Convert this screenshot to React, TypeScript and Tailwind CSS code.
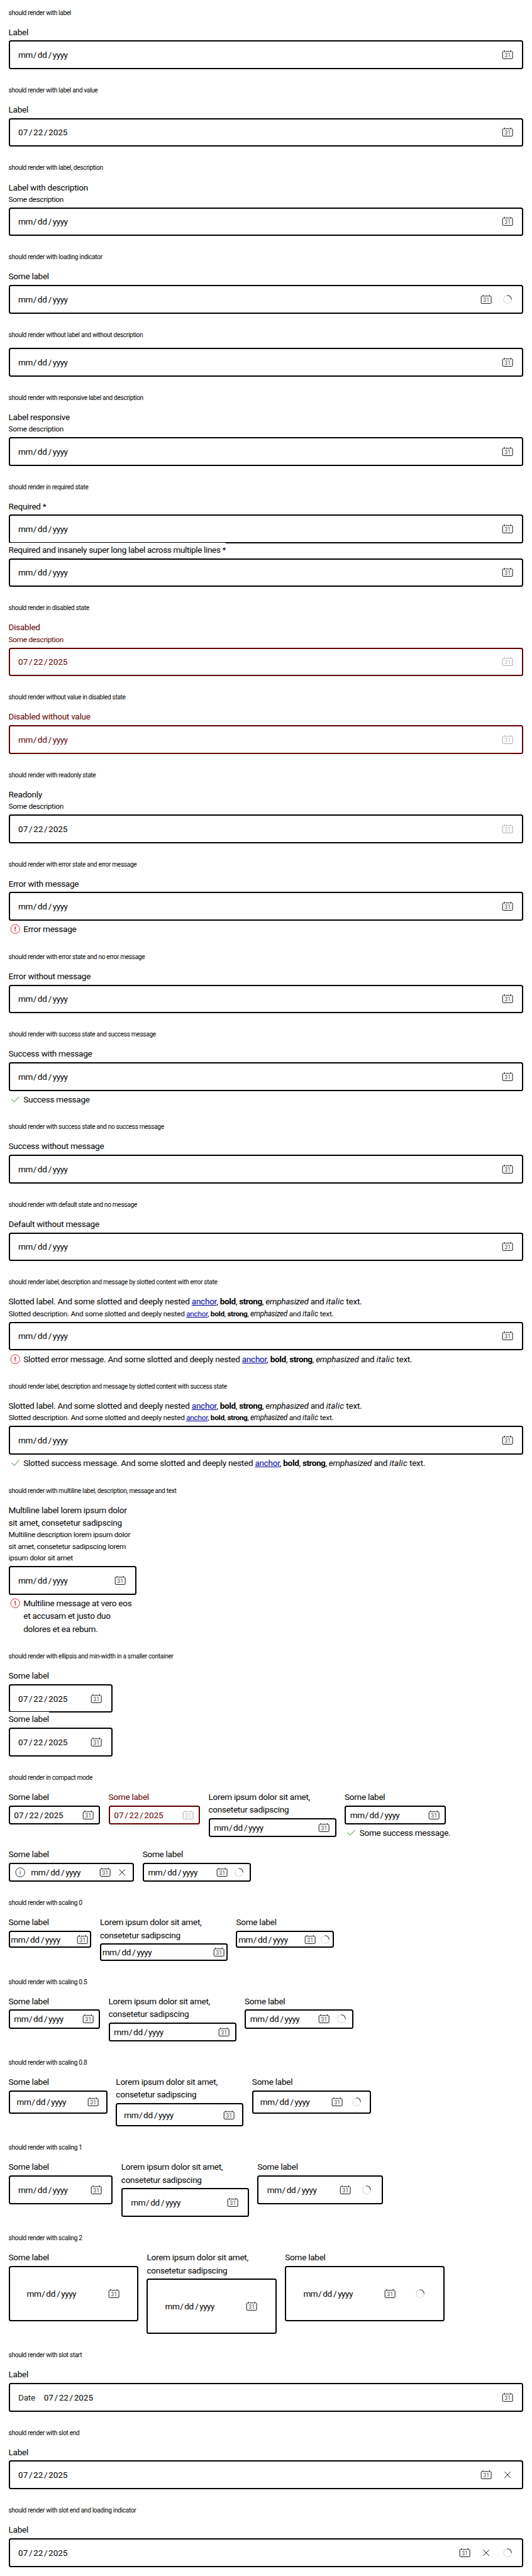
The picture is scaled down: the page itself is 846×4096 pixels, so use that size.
import type { ReactNode } from "react";

type IconProps = { muted?: boolean };

function CalendarIcon({ muted }: IconProps) {
  return (
    <svg viewBox="0 0 24 24" className={`size-6 shrink-0 ${muted ? "text-[#a3a3a3]" : "text-black"}`} fill="none" stroke="currentColor" strokeWidth="1.1">
      <path d="M4.2 5.6Q2.6 5.6 2.6 7.2V17.8Q2.6 19.4 4.2 19.4H19.8Q21.4 19.4 21.4 17.8V7.2Q21.4 5.6 19.8 5.6M8.2 5.6H15.8" />
      <path d="M6.1 3.7V6.5M17.9 3.7V6.5" strokeWidth="1.9" />
      <text x="12" y="16.3" textAnchor="middle" fontSize="10.4" fill="currentColor" stroke="none" fillOpacity="0.8">
        31
      </text>
    </svg>
  );
}

function SpinnerIcon() {
  return (
    <svg viewBox="0 0 24 24" className="size-6 shrink-0" fill="none" strokeWidth="1.2">
      <circle cx="12" cy="12" r="7.4" stroke="#bdbdbd" strokeDasharray="2 1.1" />
      <path d="M11.2 4.6A7.4 7.4 0 0 1 19.3 11.8" stroke="#fff" strokeWidth="1.8" />
      <path d="M11.2 4.6A7.4 7.4 0 0 1 19.3 11.8" stroke="#111" />
    </svg>
  );
}

function CloseIcon() {
  return (
    <svg viewBox="0 0 24 24" className="size-6 shrink-0" fill="none" stroke="#000" strokeWidth="1.1">
      <path d="M6.4 6.4L17.6 17.6M17.6 6.4L6.4 17.6" />
    </svg>
  );
}

function InfoIcon() {
  return (
    <svg viewBox="0 0 24 24" className="size-6 shrink-0" fill="none" stroke="#111" strokeWidth="1">
      <circle cx="12" cy="12" r="8.6" />
      <path d="M12 10.2V15.6" />
      <path d="M12 7.6V9" strokeWidth="1.3" />
    </svg>
  );
}

function ErrorIcon() {
  return (
    <svg viewBox="0 0 24 24" className="size-6 shrink-0" fill="none" stroke="#d5001c" strokeWidth="1">
      <circle cx="12" cy="12" r="8.5" />
      <path d="M12 7.6V13.2M12 14.6V16.3" strokeWidth="1.7" />
    </svg>
  );
}

function SuccessIcon() {
  return (
    <svg viewBox="0 0 24 24" className="size-6 shrink-0" fill="none" stroke="#197e10" strokeWidth="1.1">
      <path d="M5 11.6L10.2 16.8L19.8 6.6" />
    </svg>
  );
}

function DateValue({ value }: { value?: boolean }) {
  return value ? (
    <span className="flex grow whitespace-nowrap">
      <span className="w-5">07</span>
      <span className="w-[7.1px]">/</span>
      <span className="w-5">22</span>
      <span className="w-[7.1px]">/</span>
      <span>2025</span>
    </span>
  ) : (
    <span className="flex grow whitespace-nowrap">
      <span className="w-7 tracking-[-0.03em]">mm</span>
      <span className="w-[7.1px]">/</span>
      <span className="w-5 tracking-[-0.02em]">dd</span>
      <span className="w-[7.1px]">/</span>
      <span className="tracking-[-0.035em]">yyyy</span>
    </span>
  );
}

type FieldProps = {
  label?: ReactNode;
  overlap?: boolean;
  description?: ReactNode;
  value?: boolean;
  disabled?: boolean;
  muted?: boolean;
  loading?: boolean;
  start?: ReactNode;
  close?: boolean;
  error?: ReactNode;
  success?: ReactNode;
  width?: string;
  box?: string;
};

function Field({
  label,
  overlap,
  description,
  value,
  disabled,
  muted,
  loading,
  start,
  close,
  error,
  success,
  width = "w-full",
  box = "h-13.5 px-4 gap-4",
}: FieldProps) {
  const message = error ?? success;
  return (
    <div className={`${width} ${disabled ? "text-[#600000]" : "text-black"} text-[13.53px] tracking-[-0.018em]`}>
      {label && (
        <div className="relative mb-1 leading-6">
          <span className={overlap ? "bg-white py-1" : ""}>{label}</span>
          {description && <div className="text-[11.84px] leading-[18.5px] tracking-[-0.025em]">{description}</div>}
        </div>
      )}
      <div className={`flex items-center rounded-[3.5px] border-2 leading-6 tracking-normal ${disabled ? "border-[#600000]" : "border-black"} ${box}`}>
        {start}
        <DateValue value={value} />
        <CalendarIcon muted={muted || disabled} />
        {close && <CloseIcon />}
        {loading && <SpinnerIcon />}
      </div>
      {message && (
        <div className="mt-1 flex gap-1 whitespace-nowrap leading-6">
          {error ? <ErrorIcon /> : <SuccessIcon />}
          <span>{message}</span>
        </div>
      )}
    </div>
  );
}

function Section({ title, children }: { title: string; children: ReactNode }) {
  return (
    <section className="p-4">
      <h2 className="mb-4 h-4 whitespace-nowrap text-[10.15px] leading-4 tracking-[-0.0315em]">{title}</h2>
      {children}
    </section>
  );
}

function Slotted({ lead }: { lead: string }) {
  return (
    <>
      {lead}. And some slotted and deeply nested <a className="text-[#00009f] underline">anchor</a>,{" "}
      <b className="font-bold tracking-[-0.025em]">bold</b>, <strong className="font-bold tracking-[-0.035em]">strong</strong>,{" "}
      <em>emphasized</em> and <i className="tracking-[0.01em]">italic</i> text.
    </>
  );
}

const lorem = (
  <>
    Lorem ipsum dolor sit amet,
    <br />
    consetetur sadipscing
  </>
);

type ScalingProps = { title: string; first: string; second: string; third: string; box: string };

function Scaling({ title, first, second, third, box }: ScalingProps) {
  return (
    <Section title={title}>
      <div className="flex items-start gap-4">
        <Field width={first} box={box} label="Some label" />
        <Field width={second} box={box} label={lorem} />
        <Field width={third} box={box} label="Some label" loading />
      </div>
    </Section>
  );
}

const compact = "h-9 px-2 gap-2";

export default function App() {
  return (
    <main className="w-full overflow-hidden bg-white font-[Roboto,'Liberation_Sans',sans-serif] text-black [--spacing:3.383px]">
      <Section title="should render with label">
        <Field label="Label" />
      </Section>
      <Section title="should render with label and value">
        <Field label="Label" value />
      </Section>
      <Section title="should render with label, description">
        <Field label="Label with description" description="Some description" />
      </Section>
      <Section title="should render with loading indicator">
        <Field label="Some label" loading />
      </Section>
      <Section title="should render without label and without description">
        <Field />
      </Section>
      <Section title="should render with responsive label and description">
        <Field label="Label responsive" description="Some description" />
      </Section>
      <Section title="should render in required state">
        <Field label="Required *" />
        <Field
          label={<span className="tracking-[-0.025em]">Required and insanely super long label across multiple lines *</span>}
          overlap
        />
      </Section>
      <Section title="should render in disabled state">
        <Field label="Disabled" description="Some description" value disabled />
      </Section>
      <Section title="should render without value in disabled state">
        <Field label="Disabled without value" disabled />
      </Section>
      <Section title="should render with readonly state">
        <Field label="Readonly" description="Some description" value muted />
      </Section>
      <Section title="should render with error state and error message">
        <Field label="Error with message" error="Error message" />
      </Section>
      <Section title="should render with error state and no error message">
        <Field label="Error without message" />
      </Section>
      <Section title="should render with success state and success message">
        <Field label="Success with message" success="Success message" />
      </Section>
      <Section title="should render with success state and no success message">
        <Field label="Success without message" />
      </Section>
      <Section title="should render with default state and no message">
        <Field label="Default without message" />
      </Section>
      <Section title="should render label, description and message by slotted content with error state">
        <Field
          label={<Slotted lead="Slotted label" />}
          description={<Slotted lead="Slotted description" />}
          error={<Slotted lead="Slotted error message" />}
        />
      </Section>
      <Section title="should render label, description and message by slotted content with success state">
        <Field
          label={<Slotted lead="Slotted label" />}
          description={<Slotted lead="Slotted description" />}
          success={<Slotted lead="Slotted success message" />}
        />
      </Section>
      <Section title="should render with multiline label, description, message and text">
        <Field
          width="w-60"
          label={
            <>
              Multiline label lorem ipsum dolor
              <br />
              sit amet, consetetur sadipscing
            </>
          }
          description={
            <>
              Multiline description lorem ipsum dolor
              <br />
              sit amet, consetetur sadipscing lorem
              <br />
              ipsum dolor sit amet
            </>
          }
          error={
            <>
              Multiline message at vero eos
              <br />
              et accusam et justo duo
              <br />
              dolores et ea rebum.
            </>
          }
        />
      </Section>
      <Section title="should render with ellipsis and min-width in a smaller container">
        <Field width="w-49" label="Some label" value />
        <Field width="w-49" label="Some label" value overlap />
      </Section>
      <Section title="should render in compact mode">
        <div className="flex items-start gap-4">
          <Field width="w-43" box={compact} label="Some label" value />
          <Field width="w-43" box={compact} label="Some label" value disabled />
          <Field width="w-60" box={compact} label={lorem} />
          <Field width="w-47.5" box={compact} label="Some label" success="Some success message." />
        </div>
        <div className="mt-4 flex items-start gap-4">
          <Field width="w-59" box={compact} label="Some label" start={<InfoIcon />} close />
          <Field width="w-51" box={compact} label="Some label" loading />
        </div>
      </Section>
      <Scaling title="should render with scaling 0" first="w-39" second="w-60" third="w-46" box="h-8 px-0.5 gap-1" />
      <Scaling title="should render with scaling 0.5" first="w-43" second="w-60" third="w-51" box="h-9 px-2 gap-2" />
      <Scaling title="should render with scaling 0.8" first="w-46.5" second="w-60" third="w-56" box="h-11 px-3.25 gap-3.25" />
      <Scaling title="should render with scaling 1" first="w-49" second="w-60" third="w-59" box="h-13.5 px-4 gap-4" />
      <Scaling title="should render with scaling 2" first="w-61" second="w-61" third="w-75" box="h-26 px-8 gap-8" />
      <Section title="should render with slot start">
        <Field label="Label" start={<span className="w-8 tracking-[-0.02em] text-[#222]">Date</span>} value />
      </Section>
      <Section title="should render with slot end">
        <Field label="Label" value close />
      </Section>
      <Section title="should render with slot end and loading indicator">
        <Field label="Label" value close loading />
      </Section>
    </main>
  );
}
